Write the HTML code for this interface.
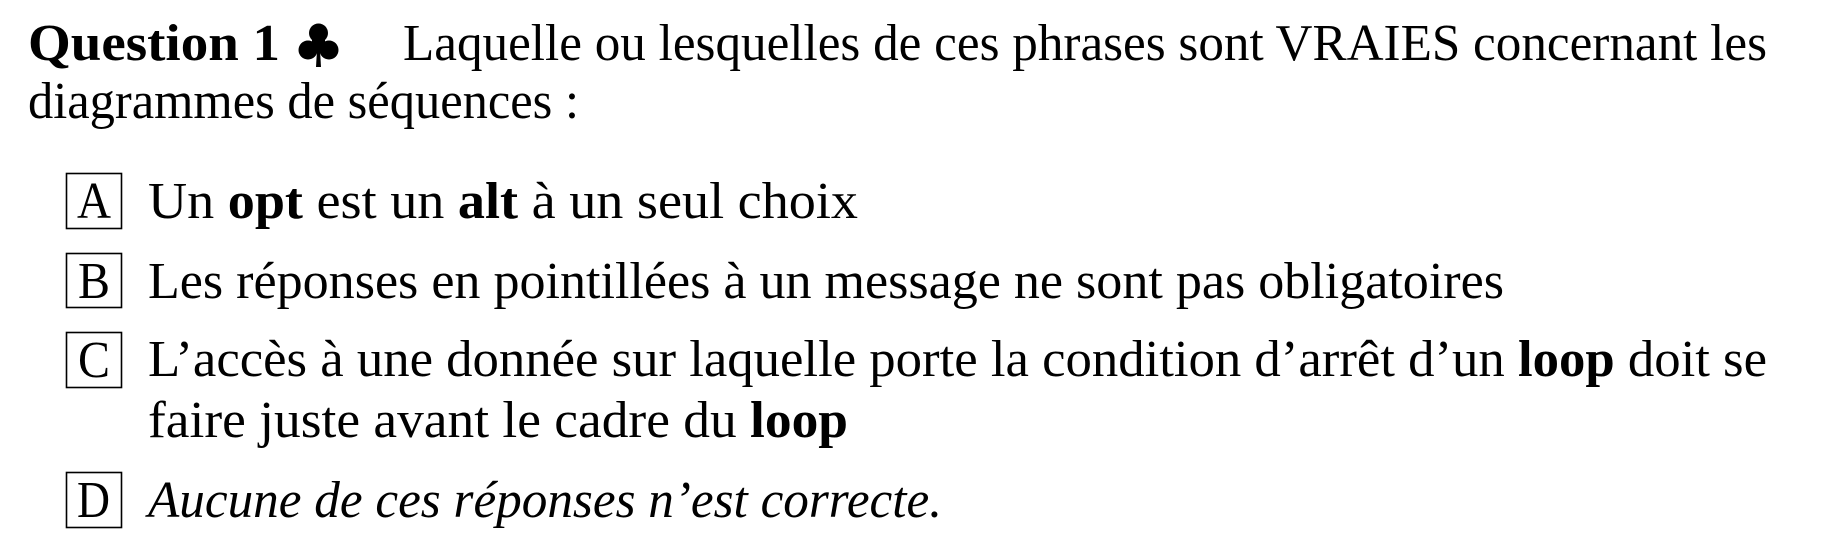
<!DOCTYPE html>
<html><head><meta charset="utf-8"><style>
html,body{margin:0;padding:0;background:#fff;}
svg{display:block;}
text{font-family:"Liberation Serif",serif;font-size:52px;fill:#000;}
.b{font-weight:bold;}
.i{font-style:italic;}
</style></head><body>
<svg width="1840" height="554" viewBox="0 0 1840 554" xmlns="http://www.w3.org/2000/svg">
<text x="28" y="60" class="b" textLength="252" lengthAdjust="spacingAndGlyphs">Question 1</text>
<g fill="#000">
<circle cx="318.5" cy="33" r="9.5"/>
<circle cx="308" cy="50" r="9.5"/>
<circle cx="329" cy="50" r="9.5"/>
<rect x="312" y="36" width="13" height="14"/>
<path d="M317 50 L320 50 L321 67 L316 67 Z"/>
</g>
<text x="403" y="60" textLength="1364" lengthAdjust="spacingAndGlyphs">Laquelle ou lesquelles de ces phrases sont VRAIES concernant les</text>
<text x="28" y="118" textLength="551" lengthAdjust="spacingAndGlyphs">diagrammes de séquences :</text>

<g fill="none" stroke="#000" stroke-width="1.6">
<rect x="66.5" y="173.5" width="55" height="55"/>
<rect x="66.5" y="253.5" width="55" height="54"/>
<rect x="66.5" y="332.5" width="55" height="55"/>
<rect x="66.5" y="472.5" width="55" height="55"/>
</g>
<text x="77" y="218" textLength="34" lengthAdjust="spacingAndGlyphs">A</text>
<text x="78" y="298" textLength="32" lengthAdjust="spacingAndGlyphs">B</text>
<text x="78" y="377" textLength="32" lengthAdjust="spacingAndGlyphs">C</text>
<text x="77" y="517" textLength="33" lengthAdjust="spacingAndGlyphs">D</text>

<text x="148" y="218" textLength="710" lengthAdjust="spacingAndGlyphs">Un <tspan class="b">opt</tspan> est un <tspan class="b">alt</tspan> à un seul choix</text>
<text x="148" y="298" textLength="1356" lengthAdjust="spacingAndGlyphs">Les réponses en pointillées à un message ne sont pas obligatoires</text>
<text x="148" y="376" textLength="1619" lengthAdjust="spacingAndGlyphs">L’accès à une donnée sur laquelle porte la condition d’arrêt d’un <tspan class="b">loop</tspan> doit se</text>
<text x="148" y="437" textLength="700" lengthAdjust="spacingAndGlyphs">faire juste avant le cadre du <tspan class="b">loop</tspan></text>
<text x="148" y="517" class="i" textLength="794" lengthAdjust="spacingAndGlyphs">Aucune de ces réponses n’est correcte.</text>
</svg>
</body></html>
